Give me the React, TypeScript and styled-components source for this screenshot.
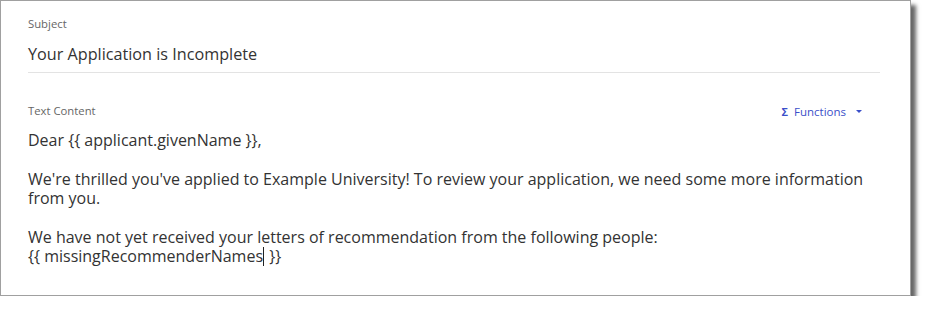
import React from "react";
import styled, { createGlobalStyle } from "styled-components";

const GlobalStyle = createGlobalStyle`
  html, body {
    margin: 0;
    padding: 0;
    background: #ffffff;
  }
  body {
    font-family: "Open Sans", "Noto Sans", "Liberation Sans", sans-serif;
  }
`;

const Panel = styled.section`
  box-sizing: border-box;
  width: 911px;
  height: 296px;
  background: #ffffff;
  border: 1px solid #a0a0a0;
  box-shadow: 5px 5px 4px rgba(0, 0, 0, 0.6);
  padding: 15px 30px 0 27px;
  display: flex;
  flex-direction: column;
`;

const Field = styled.div<{ $divider?: boolean; $gap?: number }>`
  display: flex;
  flex-direction: column;
  margin-top: ${(p) => p.$gap ?? 0}px;
  border-bottom: ${(p) => (p.$divider ? "1px solid #e3e3e3" : "none")};
`;

const LabelRow = styled.div`
  display: flex;
  align-items: center;
  justify-content: space-between;
`;

const Label = styled.label`
  font-size: 11.3px;
  line-height: 16px;
  color: #666666;
`;

const SubjectValue = styled.div`
  font-size: 16.2px;
  line-height: 22px;
  color: #333333;
  padding: 11px 0 7px;
`;

const FunctionsButton = styled.button`
  display: flex;
  align-items: center;
  gap: 6px;
  border: none;
  background: none;
  padding: 0;
  margin-right: 18px;
  margin-top: 2px;
  font-family: inherit;
  font-size: 11.5px;
  color: #3b4fc9;
  cursor: pointer;
`;

const Sigma = styled.span`
  font-weight: 700;
  font-size: 11px;
`;

const Caret = styled.span`
  display: inline-block;
  margin-left: 4px;
  border-left: 3px solid transparent;
  border-right: 3px solid transparent;
  border-top: 3px solid #3b4fc9;
  width: 0;
  height: 0;
`;

const Editor = styled.div`
  font-size: 16px;
  line-height: 19.4px;
  color: #333333;
  padding-top: 12px;
`;

const Line = styled.div`
  min-height: 19.4px;
`;

const TextCursor = styled.span`
  display: inline-block;
  width: 1px;
  height: 19px;
  background: #222222;
  vertical-align: -4px;
  margin-right: 1px;
`;

export default function App() {
  return (
    <>
      <GlobalStyle />
      <Panel>
        <Field $divider>
          <Label>Subject</Label>
          <SubjectValue>Your Application is Incomplete</SubjectValue>
        </Field>
        <Field $gap={29}>
          <LabelRow>
            <Label>Text Content</Label>
            <FunctionsButton>
              <Sigma>Σ</Sigma>
              Functions
              <Caret />
            </FunctionsButton>
          </LabelRow>
          <Editor>
            <Line>Dear {"{{"} applicant.givenName {"}}"},</Line>
            <Line />
            <Line>
              We're thrilled you've applied to Example University! To review your application, we
              need some more information from you.
            </Line>
            <Line />
            <Line>We have not yet received your letters of recommendation from the following people:</Line>
            <Line>
              {"{{"} missingRecommenderNames<TextCursor /> {"}}"}
            </Line>
          </Editor>
        </Field>
      </Panel>
    </>
  );
}
